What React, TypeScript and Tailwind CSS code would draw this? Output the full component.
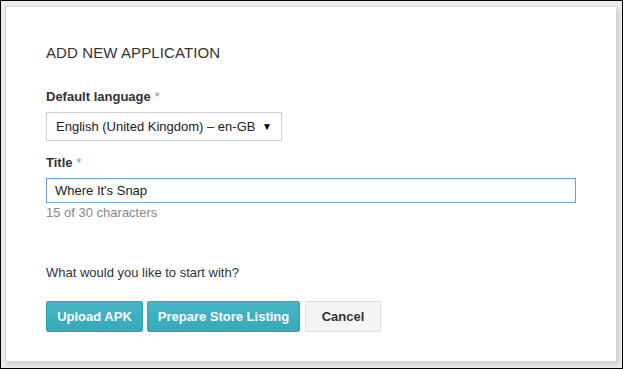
import React from "react";

function Label({ text }: { text: string }) {
  return (
    <p className="text-[13px] font-bold text-[#333] leading-[16px]">
      {text} <span className="font-normal text-[#56a7c2]">*</span>
    </p>
  );
}

export default function App() {
  return (
    <div
      className="w-[623px] h-[369px] border border-black bg-[#ececec] pt-[5px] pl-[4px] pr-[5px] pb-[6px]"
      style={{ fontFamily: '"Liberation Sans", Arial, sans-serif' }}
    >
      <div className="h-full bg-white border border-[#d6d6d6] shadow-[2px_3px_4px_rgba(0,0,0,0.12)] pl-[40px] pt-[37px]">
        <h1 className="text-[15px] text-[#333] leading-[18px] tracking-[0.1px]">ADD NEW APPLICATION</h1>

        <div className="mt-[27px]">
          <Label text="Default language" />
          <div className="mt-[7px] w-[236px] h-[29px] border border-[#cfcfcf] flex items-center justify-between pl-[9px] pr-[9px]">
            <span className="text-[13px] text-[#222] whitespace-nowrap">English (United Kingdom) – en-GB</span>
            <span className="text-[10px] text-black">▼</span>
          </div>
        </div>

        <div className="mt-[14px]">
          <Label text="Title" />
          <div className="mt-[7px] w-[530px] h-[25px] border border-[#6b9fcc] shadow-[inset_0_1px_2px_rgba(0,0,0,0.08)] flex items-center pl-[8px]">
            <span className="text-[13px] text-[#222]">Where It's Snap</span>
          </div>
          <p className="text-[13px] text-[#888] leading-[16px] mt-[2px]">15 of 30 characters</p>
        </div>

        <p className="mt-[44px] text-[13px] text-[#333] leading-[16px]">What would you like to start with?</p>

        <div className="mt-[20px] flex gap-[4px]">
          <button className="h-[31px] w-[97px] rounded-[2px] bg-gradient-to-b from-[#45b6c6] to-[#38a9b9] border border-[#36a3b3] text-white font-bold text-[13px]">
            Upload APK
          </button>
          <button className="h-[31px] w-[153px] rounded-[2px] bg-gradient-to-b from-[#45b6c6] to-[#38a9b9] border border-[#36a3b3] text-white font-bold text-[13px]">
            Prepare Store Listing
          </button>
          <button className="ml-[1px] h-[31px] w-[76px] rounded-[2px] bg-[#f5f5f5] border border-[#dcdcdc] text-[#333] font-bold text-[13px]">
            Cancel
          </button>
        </div>
      </div>
    </div>
  );
}
